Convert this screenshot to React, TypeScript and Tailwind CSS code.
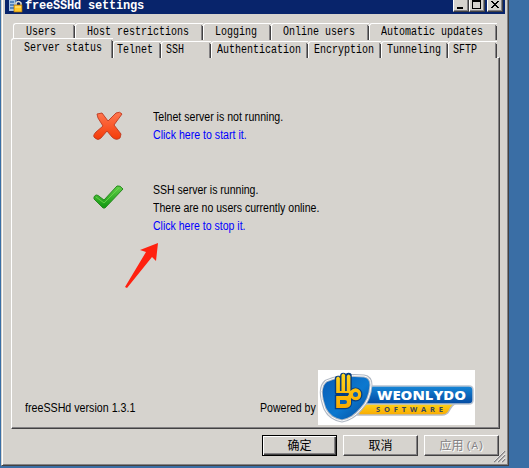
import React from 'react';

type TabProps = { label: string; box: string; text: string; active?: boolean };

function Tab({ label, box, text, active }: TabProps) {
  return (
    <div
      className={`flex shrink-0 rounded-tl-[3px] border-l border-t border-white bg-[#d6d3ce] ${active ? 'h-[20px]' : 'h-[17px]'} ${box}`}
    >
      <span className={`min-w-0 flex-1 whitespace-pre text-[12px] ${active ? 'leading-[18px]' : 'leading-[17px]'} ${text}`}>
        <span className="inline-block origin-left scale-x-[0.8333]">{label}</span>
      </span>
      <span className="mt-px w-px shrink-0 bg-[#848284]" />
      <span className="mt-[2px] w-px shrink-0 bg-[#424142]" />
    </div>
  );
}

function CaptionButton({ kind, gap }: { kind: 'min' | 'max' | 'close'; gap: string }) {
  return (
    <div className={`h-[12px] w-[16px] border-b border-l border-r border-b-[#424142] border-l-white border-r-[#424142] bg-[#d6d3ce] shadow-[inset_-1px_-1px_0_#848284] ${gap}`}>
      <svg width="14" height="11" viewBox="0 0 14 11" shapeRendering="crispEdges">
        {kind === 'min' && <path d="M3 7h6v2H3z" />}
        {kind === 'max' && <path d="M2 0h9v9H2zM3 2v6h7V2z" fillRule="evenodd" />}
        {kind === 'close' && (
          <path d="M3 1h2v1h1v1h2V2h1V1h2v1h-1v1H9v1H8v1h1v1h1v1h1v1H9V7H8V6H6v1H5v1H3V7h1V6h1V5h1V4H5V3H4V2H3z" />
        )}
      </svg>
    </div>
  );
}

function Logo() {
  return (
    <svg width="157" height="55" viewBox="0 0 157 55" className="shrink-0 bg-white">
      <defs>
        <linearGradient id="blue" x1="0" y1="0" x2="0" y2="1">
          <stop offset="0" stopColor="#1687d8" />
          <stop offset="1" stopColor="#0349a0" />
        </linearGradient>
        <linearGradient id="shield" x1="0" y1="0" x2="1" y2="1">
          <stop offset="0" stopColor="#075bb5" />
          <stop offset=".55" stopColor="#0c78cf" />
          <stop offset="1" stopColor="#034695" />
        </linearGradient>
        <linearGradient id="gold" x1="0" y1="0" x2="0" y2="1">
          <stop offset="0" stopColor="#ffd51c" />
          <stop offset="1" stopColor="#f8a900" />
        </linearGradient>
      </defs>
      <path d="M44 33H138Q134 35 131 41Q129 45 124 45H40Z" fill="url(#gold)" stroke="#b9bdc4" strokeWidth="1.5" />
      <path d="M45 16H151Q155 16 155 20V30Q155 34 151 34H45Z" fill="url(#blue)" stroke="#b8c3d2" strokeWidth="1.5" />
      <path d="M8 11Q24 4 46 6Q53 7 53 15Q52 30 43 39Q35 49 24 51Q12 49 7 39Q-1 18 8 11Z" fill="url(#shield)" stroke="#b1b9c4" strokeWidth="3" />
      <path d="M8 11Q24 4 46 6Q53 7 53 15Q52 30 43 39Q35 49 24 51Q12 49 7 39Q-1 18 8 11Z" fill="none" stroke="#fff" />
      <g fill="none" stroke="#073d80" strokeLinecap="round">
        <path d="M20 9V22M25.3 6V22M30.6 6V22" strokeWidth="6.4" />
        <path d="M20 28H27Q31 28 31 32T27 36H20Z" strokeWidth="6.4" />
        <circle cx="37.5" cy="24.5" r="4" strokeWidth="6" />
      </g>
      <path d="M18.2 8Q20 5 21.9 8V21H23.5V5Q25.3 2 27.1 5V21H28.8V6Q30.6 3 32.4 6V21Q37 16 41.5 20Q45 24 41.5 29Q37 32 33 28V34Q32 38 27 38H18.2V26H30Q31 23 30 23H18.2Z" fill="url(#gold)" />
      <path d="M18 24H31" stroke="#073d80" strokeWidth="1.2" />
      <path d="M22 30H27Q29 30 29 32T27 34H22Z" fill="#0960b3" />
      <circle cx="37.5" cy="24.5" r="2.5" fill="#0960b3" />
      <text x="59" y="29.5" textLength="89" lengthAdjust="spacingAndGlyphs" fill="#fff" className="font-['Open_Sans',sans-serif] text-[11.5px] font-extrabold">WEONLYDO</text>
      <text x="58" y="41.5" textLength="67" fill="#35455c" className="font-['Open_Sans',sans-serif] text-[7.5px] font-bold">SOFTWARE</text>
    </svg>
  );
}

function DialogButton({ children, look }: { children: React.ReactNode; look: string }) {
  return (
    <div className={`flex h-[21px] w-[75px] items-center justify-center border bg-[#d6d3ce] text-[12px] leading-[12px] ${look}`}>
      {children}
    </div>
  );
}

export default function App() {
  return (
    <div className="h-[468px] w-[529px] overflow-hidden bg-[#3a6ea5] pl-px font-['Liberation_Sans','Noto_Sans_CJK_SC',sans-serif] text-[12px] text-black">
      <div className="flex h-[466px] w-[508px] flex-col border-b border-l border-r border-b-[#424142] border-l-[#d6d3ce] border-r-[#424142] bg-[#d6d3ce] shadow-[inset_1px_0_0_#fff,inset_-1px_-1px_0_#848284]">
        <div className="ml-[3px] flex h-[14px] w-[500px] shrink-0 items-start bg-[#08246b]">
          <svg width="20" height="13" viewBox="0 0 20 13" className="shrink-0">
            <path d="M4 0H12V11H4Z" fill="#a9c5e3" />
            <path d="M5 2H9M5 5H9M5 8H9" stroke="#3972b5" strokeWidth="1.3" />
            <path d="M10 0H12V11H10Z" fill="#527bb5" />
            <path d="M11 6V3Q13.5 0 16 3V6" fill="none" stroke="#e6e2ce" strokeWidth="1.5" />
            <rect x="9" y="5" width="8" height="7" fill="#ffc829" stroke="#a56b08" strokeWidth=".7" />
            <path d="M10 7H16" stroke="#ffe994" />
          </svg>
          <span className="flex-1 font-['Liberation_Mono',monospace] text-[12px] leading-[13px] font-bold tracking-[-0.2px] text-white">freeSSHd settings</span>
          <CaptionButton kind="min" gap="" />
          <CaptionButton kind="max" gap="" />
          <CaptionButton kind="close" gap="ml-[2px] mr-[2px]" />
        </div>

        <div className="ml-[11px] mt-[9px] flex h-[17px] shrink-0 font-['Liberation_Mono',monospace]">
          <Tab label="Users" box="w-[62px]" text="pl-[12px]" />
          <Tab label="Host restrictions" box="w-[128px]" text="pl-[11px]" />
          <Tab label="Logging" box="w-[68px]" text="pl-[11px]" />
          <Tab label="Online users" box="w-[98px]" text="pl-[11px]" />
          <Tab label="Automatic updates" box="w-[128px]" text="pl-[11px]" />
        </div>
        <div className="relative z-10 -mt-[2px] ml-[9px] flex h-[20px] shrink-0 items-end font-['Liberation_Mono',monospace]">
          <Tab label="Server status" box="w-[102px] self-start" text="pl-[12px]" active />
          <Tab label="Telnet" box="w-[48px]" text="pl-[3px]" />
          <Tab label="SSH" box="w-[50px]" text="pl-[4px]" />
          <Tab label="Authentication" box="w-[97px]" text="pl-[5px]" />
          <Tab label="Encryption" box="w-[73px]" text="pl-[5px]" />
          <Tab label="Tunneling" box="w-[67px]" text="pl-[5px]" />
          <Tab label="SFTP" box="w-[49px]" text="pl-[4px]" />
        </div>

        <div className="-mt-px ml-[9px] flex h-[372px] w-[489px] shrink-0 flex-col border border-b-[#424142] border-l-white border-r-[#424142] border-t-white shadow-[inset_-1px_-1px_0_#848284]">
          <div className="mt-[50px] flex h-[36px] pl-[80px]">
            <svg width="32" height="34" viewBox="0 0 32 34" className="mt-[2px] shrink-0">
              <defs>
                <linearGradient id="cross" x1="0" y1="0" x2="0" y2="1">
                  <stop stopColor="#ff7750" />
                  <stop offset="1" stopColor="#f43b08" />
                </linearGradient>
              </defs>
              <path d="M5 4L10 3L16 11L24 3Q28 1 30 4L22 15L29 24L28 28Q24 31 20 27L15 21L9 28Q6 31 3 28Q0 26 4 22L11 16L6 8Z" fill="url(#cross)" stroke="#bd3920" strokeWidth=".9" />
            </svg>
            <div className="ml-[29px] origin-left scale-x-[0.883] whitespace-nowrap leading-[18px]">
              <div>Telnet server is not running.</div>
              <div className="text-[#0000ff]">Click here to start it.</div>
            </div>
          </div>
          <div className="mt-[37px] flex h-[54px] pl-[80px]">
            <svg width="32" height="30" viewBox="0 0 32 30" className="mt-[3px] shrink-0">
              <defs>
                <linearGradient id="check" x1="0" y1="0" x2="0" y2="1">
                  <stop stopColor="#62cf48" />
                  <stop offset="1" stopColor="#109611" />
                </linearGradient>
              </defs>
              <path d="M2 13Q4 9 8 13L12 16L25 2Q28 1 31 5L13 24H11L2 15Z" fill="url(#check)" stroke="#28891f" />
              <path d="M4 13L12 19L27 4" fill="none" stroke="#70d94c" strokeWidth=".8" />
            </svg>
            <div className="ml-[29px] origin-left scale-x-[0.878] whitespace-nowrap leading-[18px]">
              <div>SSH server is running.</div>
              <div>There are no users currently online.</div>
              <div className="text-[#0000ff]">Click here to stop it.</div>
            </div>
          </div>
          <svg width="38" height="48" viewBox="0 0 38 48" className="ml-[111px] mt-[7px] shrink-0">
            <path d="M35 1L33 19L29 15L4 46L2 45L23 10L17 8Z" fill="#ff2110" />
          </svg>
          <div className="mt-auto mb-[3px] flex h-[55px] pl-[13px]">
            <span className="mt-[29px] w-[235px] leading-[18px]">
              <span className="inline-block origin-left scale-x-[0.89] whitespace-nowrap">freeSSHd version 1.3.1</span>
            </span>
            <span className="mt-[29px] w-[58px] leading-[18px]">
              <span className="inline-block origin-left scale-x-[0.88] whitespace-nowrap">Powered by</span>
            </span>
            <Logo />
          </div>
        </div>
        <div className="ml-[260px] mt-[6px] flex gap-[6px]">
          <DialogButton look="border-black shadow-[inset_1px_1px_0_#fff,inset_-1px_-1px_0_#424142,inset_-2px_-2px_0_#848284]">确定</DialogButton>
          <DialogButton look="border-t-white border-l-white border-r-[#424142] border-b-[#424142] shadow-[inset_-1px_-1px_0_#848284]">取消</DialogButton>
          <DialogButton look="border-t-white border-l-white border-r-[#424142] border-b-[#424142] shadow-[inset_-1px_-1px_0_#848284] text-[#848284] [text-shadow:1px_1px_0_#fff]">
            <span>应用</span><span className="ml-[2px] font-['Liberation_Mono',monospace] text-[11px] tracking-[-0.6px]">(A)</span>
          </DialogButton>
        </div>
        <svg width="12" height="12" viewBox="0 0 12 12" className="-mt-[5px] ml-[492px] shrink-0">
          <path d="M0 11L11 0M4 11L11 4M8 11L11 8" stroke="#848284" strokeWidth="1.5" />
          <path d="M-1 11L10 0M3 11L11 3M7 11L11 7" stroke="#fff" strokeWidth=".7" />
        </svg>
      </div>
    </div>
  );
}
